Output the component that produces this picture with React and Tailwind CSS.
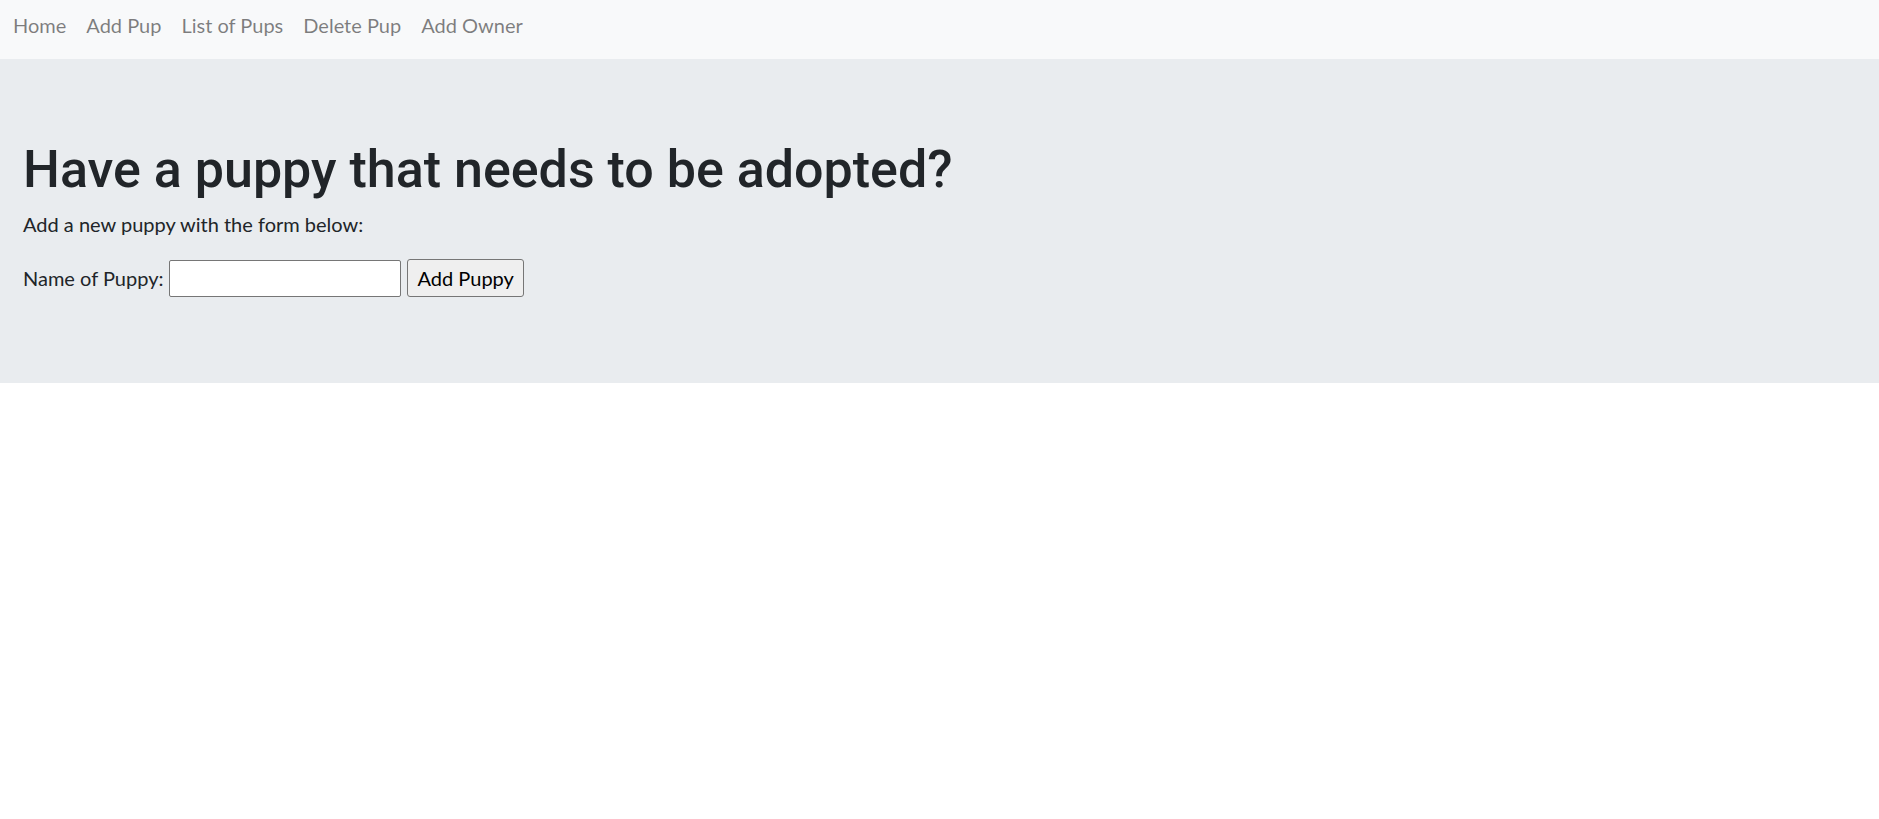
import React from 'react';

const links = ['Home', 'Add Pup', 'List of Pups', 'Delete Pup', 'Add Owner'];

function Navbar() {
  return (
    <nav className="flex h-[59px] items-center bg-[#f8f9fa] px-[3px] pb-[10px]">
      {links.map((label) => (
        <a
          key={label}
          href="#"
          className="px-[10px] text-[20px] leading-[30px] text-[rgba(0,0,0,0.5)] hover:text-[rgba(0,0,0,0.7)]"
        >
          {label}
        </a>
      ))}
    </nav>
  );
}

export default function App() {
  return (
    <div className="min-h-screen bg-white font-['Lato',sans-serif] text-[#212529]">
      <Navbar />
      <div className="h-[324px] bg-[#e9ecef] px-[23px] pt-[80px]">
        <h1 className="mb-[8px] font-['Roboto',sans-serif] text-[52px] font-medium leading-[1.2]">
          Have a puppy that needs to be adopted?
        </h1>
        <p className="mb-[20px] text-[20px] leading-[30px]">Add a new puppy with the form below:</p>
        <form className="flex items-center" onSubmit={(e) => e.preventDefault()}>
          <label className="text-[20px] leading-[30px]">Name of Puppy:</label>
          <input
            type="text"
            className="ml-[6px] h-[37px] w-[232px] rounded-[2px] border border-[#767676] bg-white px-1 text-[20px]"
          />
          <button
            type="submit"
            className="ml-[6px] h-[38px] rounded-[3px] border border-[#767676] bg-[#efefef] px-[9px] text-[20px] leading-[30px] text-black"
          >
            Add Puppy
          </button>
        </form>
      </div>
    </div>
  );
}
